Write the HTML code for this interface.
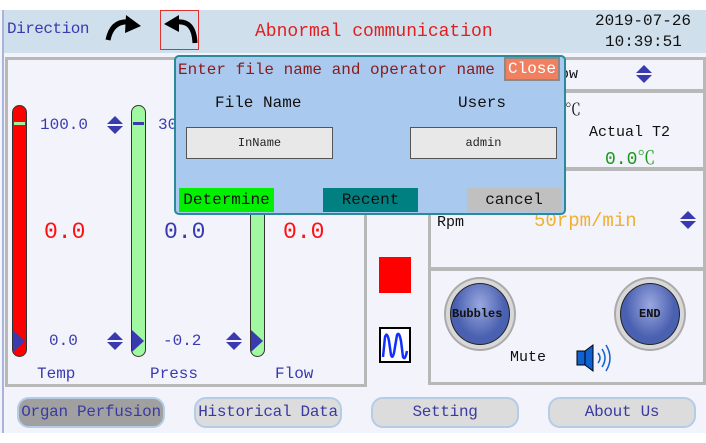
<!DOCTYPE html><html><head><style>
*{margin:0;padding:0;box-sizing:border-box}
body{width:706px;height:443px;background:#fff;position:relative;overflow:hidden;font-family:"Liberation Mono","Noto Serif CJK SC",monospace}
.a{position:absolute;white-space:nowrap}
.bar{position:absolute;width:15px;border:1px solid #333;border-radius:8px}
.ud{position:absolute;width:16px;height:18px}
.panel{position:absolute;border:3px solid #b8b8b8;background:#f3f3fb}
.btn{position:absolute;top:397px;height:31px;border:2px solid #b4cce6;border-radius:12px;background:#dcdcdc;color:#3a3aa0;font-size:16px;text-align:center;line-height:27px;white-space:nowrap;letter-spacing:-0.3px;overflow:hidden}
</style></head><body>
<div class="a" style="left:0;top:10px;width:706px;height:423px;background:#f3f3fb"></div>
<div class="a" style="left:2px;top:10px;width:2px;height:423px;background:#a8b4d8"></div>
<div class="a" style="left:4px;top:10px;width:702px;height:43px;background:#cfe0ec"></div>
<div class="a" style="left:7px;top:20px;font-size:16px;color:#3a3ab0;letter-spacing:-0.5px">Direction</div>
<svg class="a" style="left:104px;top:14px" width="40" height="30"><path d="M4 26 Q8 6 26 8" stroke="#000" stroke-width="5" fill="none"/><path d="M22 1 L37 12 L21 19 Z" fill="#000"/></svg>
<div class="a" style="left:160px;top:10px;width:39px;height:40px;border:1px solid #e03030"></div>
<svg class="a" style="left:161px;top:14px" width="38" height="32"><path d="M34 29 Q33 6 16 8" stroke="#000" stroke-width="5" fill="none"/><path d="M18 1 L3 10 L18 18 Z" fill="#000"/></svg>
<div class="a" style="left:255px;top:22px;font-size:18px;color:#e02020">Abnormal communication</div>
<div class="a" style="left:595px;top:12px;font-size:16px;color:#111">2019-07-26</div>
<div class="a" style="left:605px;top:33px;font-size:16px;color:#111">10:39:51</div>

<div class="panel" style="left:5px;top:57px;width:362px;height:330px"></div>
<div class="bar" style="left:12px;top:105px;height:252px;background:#ff0000"></div>
<div class="a" style="left:14px;top:122px;width:11px;height:3px;background:#a0f0a0"></div>
<div class="bar" style="left:131px;top:105px;height:252px;background:#a0f8a0"></div>
<div class="a" style="left:133px;top:122px;width:11px;height:3px;background:#3a3ab0"></div>
<div class="bar" style="left:250px;top:105px;height:252px;background:#a0f8a0"></div>
<svg class="a" style="left:13px;top:330px" width="12" height="22"><path d="M0 0 L12 11 L0 22Z" fill="#3a3ab0"/></svg>
<svg class="a" style="left:132px;top:330px" width="12" height="22"><path d="M0 0 L12 11 L0 22Z" fill="#3a3ab0"/></svg>
<svg class="a" style="left:251px;top:330px" width="12" height="22"><path d="M0 0 L12 11 L0 22Z" fill="#3a3ab0"/></svg>
<div class="a" style="left:40px;top:116px;font-size:16px;color:#3a3ab0">100.0</div>
<div class="a" style="left:158px;top:116px;font-size:16px;color:#3a3ab0">30</div>
<svg class="ud" style="left:107px;top:116px"><path d="M8 0L16 8H0Z M0 10H16L8 18Z" fill="#3a3ab0"/></svg>
<div class="a" style="left:44px;top:219px;font-size:23px;color:#ff1010">0.0</div>
<div class="a" style="left:164px;top:219px;font-size:23px;color:#3a3ab0">0.0</div>
<div class="a" style="left:283px;top:219px;font-size:23px;color:#ff1010">0.0</div>
<div class="a" style="left:49px;top:332px;font-size:16px;color:#3a3ab0">0.0</div>
<div class="a" style="left:163px;top:332px;font-size:16px;color:#3a3ab0">-0.2</div>
<svg class="ud" style="left:107px;top:332px"><path d="M8 0L16 8H0Z M0 10H16L8 18Z" fill="#3a3ab0"/></svg>
<svg class="ud" style="left:226px;top:332px"><path d="M8 0L16 8H0Z M0 10H16L8 18Z" fill="#3a3ab0"/></svg>
<div class="a" style="left:37px;top:365px;font-size:16px;color:#3a3ab0">Temp</div>
<div class="a" style="left:150px;top:365px;font-size:16px;color:#3a3ab0">Press</div>
<div class="a" style="left:275px;top:365px;font-size:16px;color:#3a3ab0">Flow</div>

<div class="a" style="left:388px;top:210px;width:22px;height:3px;background:#111"></div>
<div class="a" style="left:379px;top:257px;width:32px;height:36px;background:#ff0000"></div>
<svg class="a" style="left:379px;top:327px" width="32" height="36"><rect x="1" y="1" width="30" height="34" fill="#fff" stroke="#000" stroke-width="2"/><path d="M4 30 L6 10 Q8 4 10 14 L12 28 Q14 34 16 20 L18 8 Q20 4 22 14 L24 30 Q26 34 28 24" stroke="#1030ff" stroke-width="2.5" fill="none"/></svg>

<div class="panel" style="left:428px;top:57px;width:278px;height:35px"></div>
<div class="a" style="left:560px;top:66px;font-size:15px;color:#111">ow</div>
<svg class="ud" style="left:636px;top:65px"><path d="M8 0L16 8H0Z M0 10H16L8 18Z" fill="#3a3ab0"/></svg>
<div class="panel" style="left:428px;top:90px;width:278px;height:80px"></div>
<div class="a" style="left:565px;top:97px;font-size:16px;color:#111">℃</div>
<div class="a" style="left:589px;top:124px;font-size:15px;color:#111">Actual T2</div>
<div class="a" style="left:605px;top:144px;font-size:18px;color:#1a9a1a">0.0℃</div>
<div class="panel" style="left:428px;top:168px;width:278px;height:102px"></div>
<div class="a" style="left:437px;top:214px;font-size:15px;color:#111">Rpm</div>
<div class="a" style="left:534px;top:210px;font-size:19px;color:#f0b030">50rpm/min</div>
<svg class="ud" style="left:680px;top:211px"><path d="M8 0L16 8H0Z M0 10H16L8 18Z" fill="#3a3ab0"/></svg>
<div class="panel" style="left:428px;top:268px;width:278px;height:117px"></div>
<div class="a" style="left:444px;top:277px;width:72px;height:74px;border-radius:50%;background:#d8d8d8;border:2px solid #aaa"></div>
<div class="a" style="left:450px;top:283px;width:60px;height:62px;border-radius:50%;background:radial-gradient(ellipse at 50% 35%,#9aa8e0,#4a60b0 60%);border:1px solid #222"></div>
<div class="a" style="left:452px;top:307px;font-size:12px;font-weight:bold;color:#111">Bubbles</div>
<div class="a" style="left:614px;top:277px;width:72px;height:74px;border-radius:50%;background:#d8d8d8;border:2px solid #aaa"></div>
<div class="a" style="left:620px;top:283px;width:60px;height:62px;border-radius:50%;background:radial-gradient(ellipse at 50% 35%,#9aa8e0,#4a60b0 60%);border:1px solid #222"></div>
<div class="a" style="left:639px;top:307px;font-size:12px;font-weight:bold;color:#111">END</div>
<div class="a" style="left:510px;top:349px;font-size:15px;color:#111">Mute</div>
<svg class="a" style="left:576px;top:342px" width="42" height="32"><rect x="1" y="9" width="8" height="14" fill="#1060d0" stroke="#000"/><path d="M9 9 L17 3 V29 L9 23Z" fill="#1060d0" stroke="#000"/><path d="M22 11 Q26 16 22 21 M26 7 Q32 16 26 25 M30 3 Q38 16 30 29" stroke="#1060d0" stroke-width="1.5" fill="none"/></svg>

<div class="btn" style="left:17px;width:148px;background:#a0a0a0">Organ Perfusion</div>
<div class="btn" style="left:194px;width:148px">Historical Data</div>
<div class="btn" style="left:371px;width:148px">Setting</div>
<div class="btn" style="left:548px;width:148px">About Us</div>
<div class="a" style="left:0;top:433px;width:706px;height:10px;background:#fff"></div>

<div class="a" style="left:174px;top:55px;width:392px;height:160px;background:#a9c9ee;border:2px solid #2a8a9a;border-radius:5px"></div>
<div class="a" style="left:178px;top:61px;font-size:16px;color:#8b1a1a">Enter file name and operator name</div>
<div class="a" style="left:504px;top:57px;width:56px;height:24px;background:#f08060;border:2px solid #8a8a8a;color:#fff;font-size:16px;line-height:20px;text-align:center">Close</div>
<div class="a" style="left:215px;top:94px;font-size:16px;color:#111">File Name</div>
<div class="a" style="left:458px;top:94px;font-size:16px;color:#111">Users</div>
<div class="a" style="left:186px;top:127px;width:147px;height:32px;background:#e8e8e8;border:1px solid #555;font-size:12px;text-align:center;line-height:30px;color:#222">InName</div>
<div class="a" style="left:410px;top:127px;width:147px;height:32px;background:#e8e8e8;border:1px solid #555;font-size:12px;text-align:center;line-height:30px;color:#222">admin</div>
<div class="a" style="left:179px;top:188px;width:95px;height:24px;background:#00f000;font-size:16px;line-height:24px;text-align:center;color:#111">Determine</div>
<div class="a" style="left:323px;top:188px;width:95px;height:24px;background:#008080;font-size:16px;line-height:24px;text-align:center;color:#111">Recent</div>
<div class="a" style="left:467px;top:188px;width:94px;height:24px;background:#c0c0c0;font-size:16px;line-height:24px;text-align:center;color:#111">cancel</div>
</body></html>
